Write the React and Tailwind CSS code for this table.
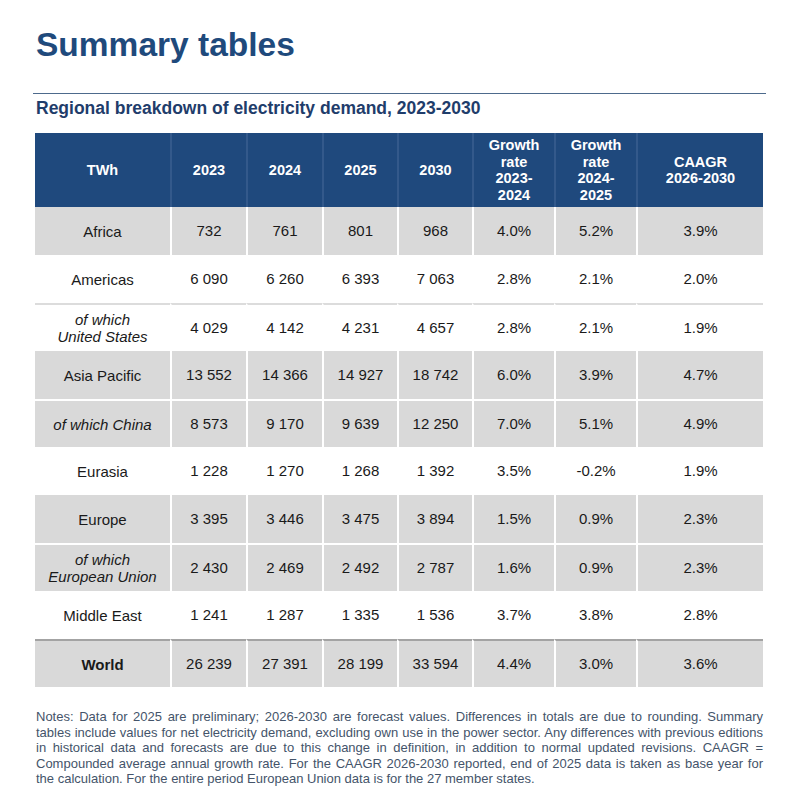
const cols = "grid grid-cols-[135px_76px_76px_75px_75px_82px_82px_127px]";

const headers = [
  ["TWh"],
  ["2023"],
  ["2024"],
  ["2025"],
  ["2030"],
  ["Growth", "rate", "2023-", "2024"],
  ["Growth", "rate", "2024-", "2025"],
  ["CAAGR", "2026-2030"],
];

const rows = [
  { label: ["Africa"], vals: ["732", "761", "801", "968", "4.0%", "5.2%", "3.9%"], gray: true },
  { label: ["Americas"], vals: ["6 090", "6 260", "6 393", "7 063", "2.8%", "2.1%", "2.0%"] },
  { label: ["of which", "United States"], italic: true, line: "light", vals: ["4 029", "4 142", "4 231", "4 657", "2.8%", "2.1%", "1.9%"] },
  { label: ["Asia Pacific"], vals: ["13 552", "14 366", "14 927", "18 742", "6.0%", "3.9%", "4.7%"], gray: true },
  { label: ["of which China"], italic: true, gray: true, line: "white", vals: ["8 573", "9 170", "9 639", "12 250", "7.0%", "5.1%", "4.9%"] },
  { label: ["Eurasia"], vals: ["1 228", "1 270", "1 268", "1 392", "3.5%", "-0.2%", "1.9%"] },
  { label: ["Europe"], vals: ["3 395", "3 446", "3 475", "3 894", "1.5%", "0.9%", "2.3%"], gray: true },
  { label: ["of which", "European Union"], italic: true, gray: true, line: "white", vals: ["2 430", "2 469", "2 492", "2 787", "1.6%", "0.9%", "2.3%"] },
  { label: ["Middle East"], vals: ["1 241", "1 287", "1 335", "1 536", "3.7%", "3.8%", "2.8%"] },
  { label: ["World"], bold: true, gray: true, line: "dark", vals: ["26 239", "27 391", "28 199", "33 594", "4.4%", "3.0%", "3.6%"] },
];

function Row({ row }) {
  const bg = row.gray ? "bg-[#d9d9d9]" : "bg-white";
  const top =
    row.line === "light"
      ? "border-t-2 border-t-[#dcdcdc]"
      : row.line === "white"
      ? "border-t-2 border-t-white"
      : row.line === "dark"
      ? "border-t-2 border-t-[#a3a3a3]"
      : "";
  return (
    <div className={`${cols} h-[48px]`}>
      <div
        className={`${bg} ${top} flex flex-col items-center justify-center leading-[17px] ${row.italic ? "italic" : ""} ${row.bold ? "font-bold" : ""}`}
      >
        {row.label.map((l) => (
          <span key={l}>{l}</span>
        ))}
      </div>
      {row.vals.map((v, i) => (
        <div key={i} className={`${bg} ${top} border-l-2 border-l-white flex items-center justify-center`}>
          {v}
        </div>
      ))}
    </div>
  );
}

export default function App() {
  return (
    <div className="min-h-[806px] bg-white pl-[35px] pr-[36px] font-['Liberation_Sans',Arial,sans-serif]">
      <h1 className="pt-[25px] pl-[1px] text-[33.5px] leading-[40px] font-bold text-[#1f4a7c]">Summary tables</h1>
      <div className="mt-[28px] -ml-[2px] -mr-[3px] h-px bg-[#4d6a8c]" />
      <h2 className="mt-[3px] pl-[1px] text-[17.5px] leading-[22px] font-bold text-[#1f3d6b]">
        Regional breakdown of electricity demand, 2023-2030
      </h2>

      <div className="mt-[14px] w-[728px] text-[15px] text-[#1a1a1a]">
        <div className={`${cols} h-[74px] bg-[#1f497d] text-white font-bold text-[14.5px] leading-[16.5px]`}>
          {headers.map((h, i) => (
            <div
              key={i}
              className={`flex flex-col items-center justify-center text-center ${i > 0 ? "border-l-2 border-l-[#33598b]" : ""}`}
            >
              {h.map((l) => (
                <span key={l}>{l}</span>
              ))}
            </div>
          ))}
        </div>
        {rows.map((r) => (
          <Row key={r.label.join(" ")} row={r} />
        ))}
      </div>

      <p className="mt-[22px] w-[728px] pl-[1px] text-[13px] leading-[15.5px] text-justify text-[#44546a]">
        Notes: Data for 2025 are preliminary; 2026-2030 are forecast values. Differences in totals are due to rounding. Summary
        tables include values for net electricity demand, excluding own use in the power sector. Any differences with previous
        editions in historical data and forecasts are due to this change in definition, in addition to normal updated revisions.
        CAAGR = Compounded average annual growth rate. For the CAAGR 2026-2030 reported, end of 2025 data is taken as base year
        for the calculation. For the entire period European Union data is for the 27 member states.
      </p>
    </div>
  );
}
